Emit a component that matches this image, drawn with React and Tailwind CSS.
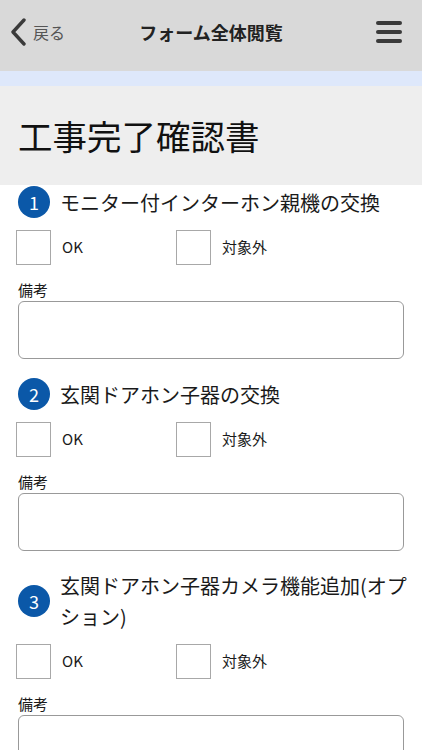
import React from "react";

const ITEMS = [
  { n: 1, title: "モニター付インターホン親機の交換" },
  { n: 2, title: "玄関ドアホン子器の交換" },
  { n: 3, title: "玄関ドアホン子器カメラ機能追加(オプション)" },
];

const FONT = { fontFamily: '"Noto Sans CJK JP", "Noto Sans", sans-serif' };

export default function App() {
  return (
    <div className="min-h-[750px] w-full bg-white text-[#1a1a1a]" style={FONT}>
      <Header />
      <div className="h-[15px] bg-[#dee8fb]" />
      <div className="flex h-[99px] items-center bg-[#eeeeee] pl-[18px]">
        <h1 className="text-[34.5px] leading-none text-[#111]">工事完了確認書</h1>
      </div>

      <div className="pt-[1px]">
        {ITEMS.map((item, i) => (
          <Item key={item.n} item={item} first={i === 0} />
        ))}
      </div>
    </div>
  );
}

function Header() {
  return (
    <header className="relative flex h-[71px] items-center justify-between bg-[#d9d9d9] pb-[7px] pl-[10px] pr-[20px]">
      <div className="flex items-center gap-[7px]">
        <svg width="16" height="28" viewBox="0 0 16 28" fill="none">
          <path d="M14 2 L3 14 L14 26" stroke="#3a3a3a" strokeWidth="3.4" strokeLinecap="round" strokeLinejoin="round" />
        </svg>
        <span className="text-[16px] text-[#555]">戻る</span>
      </div>
      <div className="absolute left-1/2 top-[32px] -translate-x-1/2 -translate-y-1/2 text-[18px] font-bold text-[#222]">
        フォーム全体閲覧
      </div>
      <div className="flex w-[26px] flex-col gap-[5px]">
        <span className="h-[4px] rounded-full bg-[#3a3a3a]" />
        <span className="h-[4px] rounded-full bg-[#3a3a3a]" />
        <span className="h-[4px] rounded-full bg-[#3a3a3a]" />
      </div>
    </header>
  );
}

function Item({ item, first }) {
  return (
    <section className={first ? "" : "mt-[19px]"}>
      <div className="flex min-h-[32px] items-center gap-[10px] pl-[18px] pr-[14px]">
        <span className="flex h-[32px] w-[32px] shrink-0 items-center justify-center rounded-full bg-[#0b58a8] text-[18px] text-white">
          {item.n}
        </span>
        <h2 className="text-[20px] leading-[31px] text-[#1a1a1a]">{item.title}</h2>
      </div>

      <div className="mt-[12px] flex items-center pl-[16px]">
        <label className="flex w-[160px] items-center">
          <span className="h-[35px] w-[35px] border border-[#a8a8a8] bg-white" />
          <span className="ml-[11px] text-[15px]">OK</span>
        </label>
        <label className="flex items-center">
          <span className="h-[35px] w-[35px] border border-[#a8a8a8] bg-white" />
          <span className="ml-[11px] text-[15px]">対象外</span>
        </label>
      </div>

      <div className="mt-[14px] px-[18px]">
        <div className="text-[15px] leading-[22px]">備考</div>
        <div className="h-[58px] rounded-[6px] border border-[#999] bg-white" />
      </div>
    </section>
  );
}
